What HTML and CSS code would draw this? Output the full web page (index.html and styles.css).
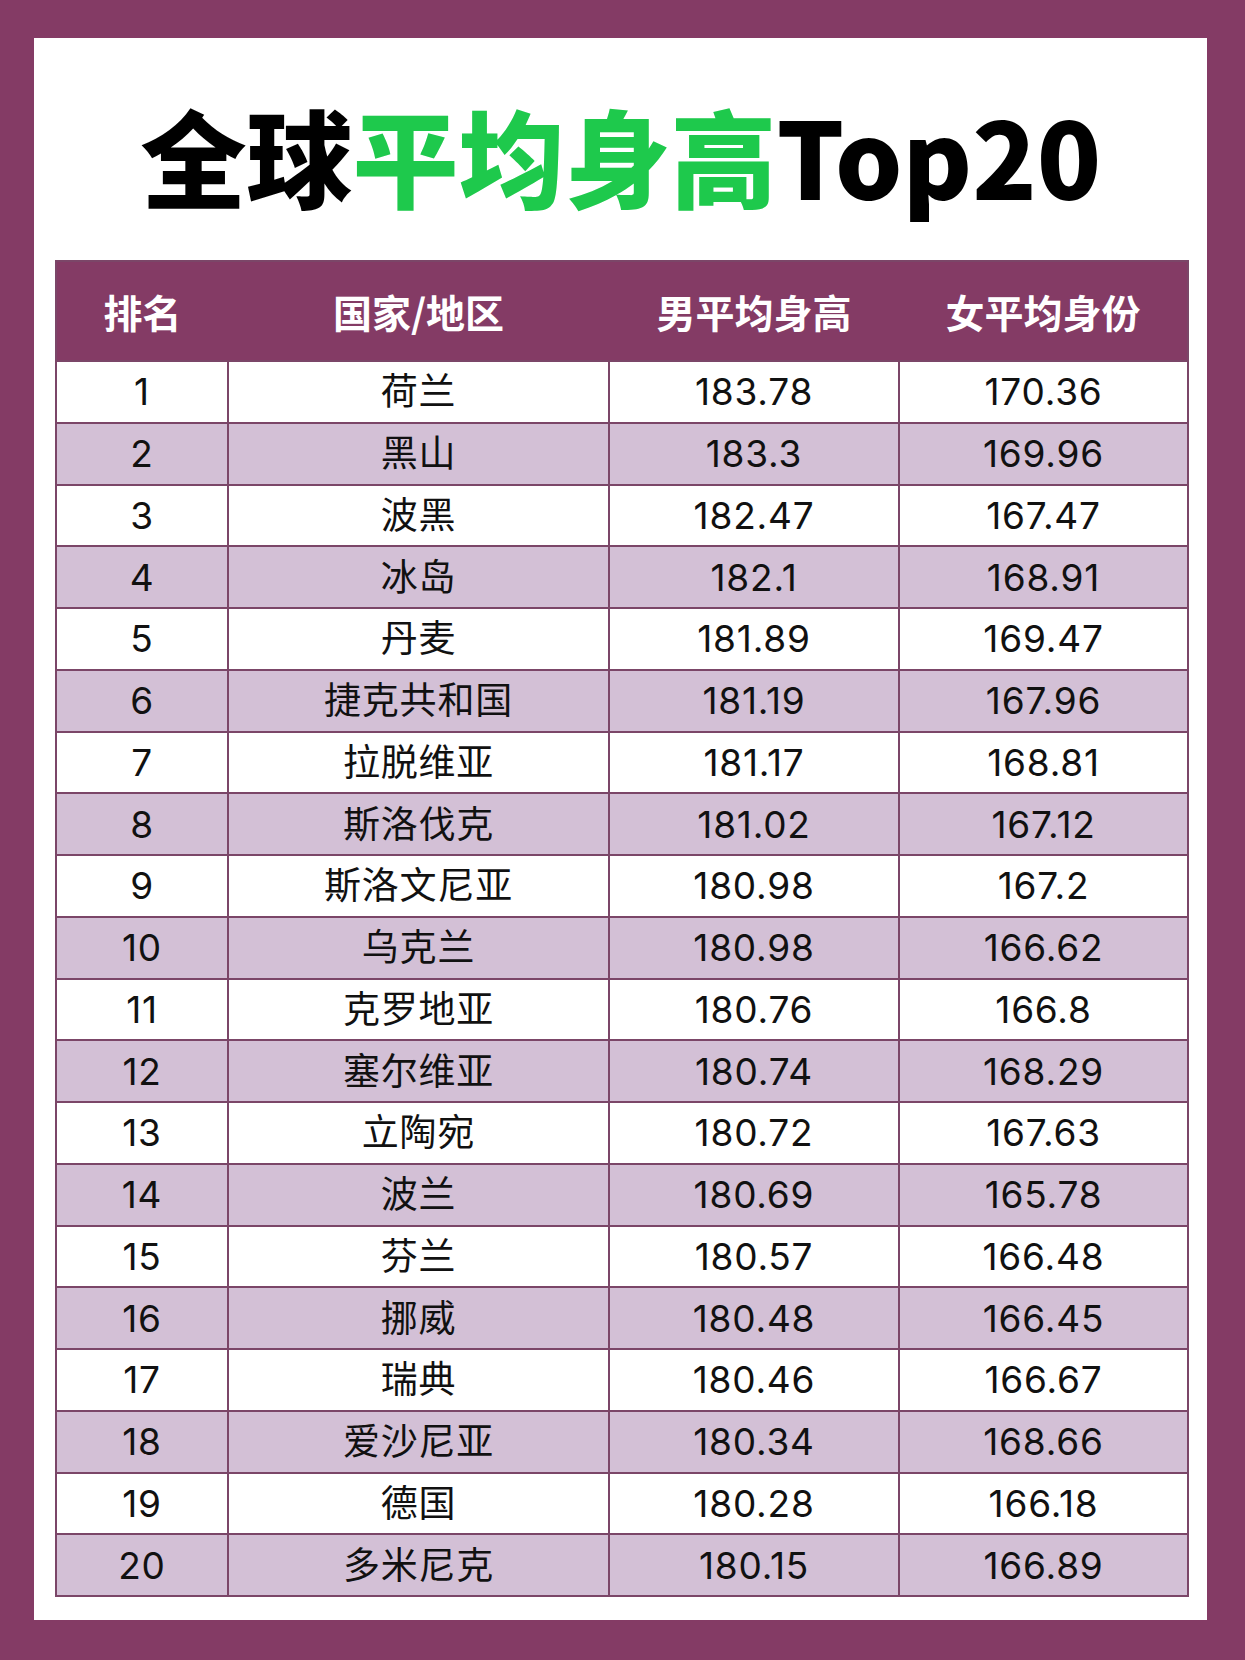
FILE: index.html
```html
<!DOCTYPE html>
<html lang="zh-CN">
<head>
<meta charset="utf-8">
<title>全球平均身高Top20</title>
<link rel="stylesheet" href="styles.css">
</head>
<body>
<div class="frame">
  <div class="panel">
    <h1 class="title"><span class="dark">全球</span><span class="green">平均身高</span><span class="dark">Top20</span></h1>
    <table class="ranking">
      <colgroup>
        <col class="c1"><col class="c2"><col class="c3"><col class="c4">
      </colgroup>
      <thead>
        <tr><th>排名</th><th>国家/地区</th><th>男平均身高</th><th>女平均身份</th></tr>
      </thead>
      <tbody>
        <tr><td>1</td><td>荷兰</td><td>183.78</td><td>170.36</td></tr>
        <tr><td>2</td><td>黑山</td><td>183.3</td><td>169.96</td></tr>
        <tr><td>3</td><td>波黑</td><td>182.47</td><td>167.47</td></tr>
        <tr><td>4</td><td>冰岛</td><td>182.1</td><td>168.91</td></tr>
        <tr><td>5</td><td>丹麦</td><td>181.89</td><td>169.47</td></tr>
        <tr><td>6</td><td>捷克共和国</td><td>181.19</td><td>167.96</td></tr>
        <tr><td>7</td><td>拉脱维亚</td><td>181.17</td><td>168.81</td></tr>
        <tr><td>8</td><td>斯洛伐克</td><td>181.02</td><td>167.12</td></tr>
        <tr><td>9</td><td>斯洛文尼亚</td><td>180.98</td><td>167.2</td></tr>
        <tr><td>10</td><td>乌克兰</td><td>180.98</td><td>166.62</td></tr>
        <tr><td>11</td><td>克罗地亚</td><td>180.76</td><td>166.8</td></tr>
        <tr><td>12</td><td>塞尔维亚</td><td>180.74</td><td>168.29</td></tr>
        <tr><td>13</td><td>立陶宛</td><td>180.72</td><td>167.63</td></tr>
        <tr><td>14</td><td>波兰</td><td>180.69</td><td>165.78</td></tr>
        <tr><td>15</td><td>芬兰</td><td>180.57</td><td>166.48</td></tr>
        <tr><td>16</td><td>挪威</td><td>180.48</td><td>166.45</td></tr>
        <tr><td>17</td><td>瑞典</td><td>180.46</td><td>166.67</td></tr>
        <tr><td>18</td><td>爱沙尼亚</td><td>180.34</td><td>168.66</td></tr>
        <tr><td>19</td><td>德国</td><td>180.28</td><td>166.18</td></tr>
        <tr><td>20</td><td>多米尼克</td><td>180.15</td><td>166.89</td></tr>
      </tbody>
    </table>
  </div>
</div>
</body>
</html>
```

FILE: styles.css
```css
html, body {
  margin: 0;
  padding: 0;
}
body {
  background: #843b65;
  width: 1245px;
  height: 1660px;
  overflow: hidden;
}
.frame {
  padding: 38px 38px 40px 34px;
}
.panel {
  background: #ffffff;
  height: 1582px;
  box-sizing: border-box;
  padding: 0 20px 0 21px;
  display: flex;
  flex-direction: column;
}
.title {
  margin: 0;
  height: 222px;
  box-sizing: border-box;
  padding-top: 10px;
  display: flex;
  align-items: center;
  justify-content: center;
  font-family: "Noto Sans CJK SC", sans-serif;
  font-weight: 900;
  font-size: 106px;
  line-height: 1;
  letter-spacing: 0;
  white-space: nowrap;
}
.dark { color: #000000; }
.green { color: #1ec94c; }

.ranking {
  width: 1132px;
  border-collapse: collapse;
  table-layout: fixed;
  border: 2px solid #7b4668;
}
.c1 { width: 172px; }
.c2 { width: 381px; }
.c3 { width: 290px; }
.c4 { width: 289px; }

.ranking th {
  background: #843b65;
  color: #ffffff;
  height: 98px;
  padding: 0;
  font-family: "Noto Sans CJK SC", sans-serif;
  font-weight: 700;
  font-size: 39px;
  line-height: 1;
  text-align: center;
  vertical-align: middle;
}
.ranking td {
  height: 59.75px;
  padding: 0;
  border: 2px solid #7b4668;
  font-family: Inter, "Noto Sans CJK SC", sans-serif;
  font-weight: 400;
  font-size: 37px;
  line-height: 1;
  letter-spacing: 0.8px;
  color: #111111;
  text-align: center;
  vertical-align: middle;
}
.ranking tbody tr:nth-child(even) td {
  background: #d3c0d6;
}
.ranking tbody tr:nth-child(odd) td {
  background: #ffffff;
}
```
